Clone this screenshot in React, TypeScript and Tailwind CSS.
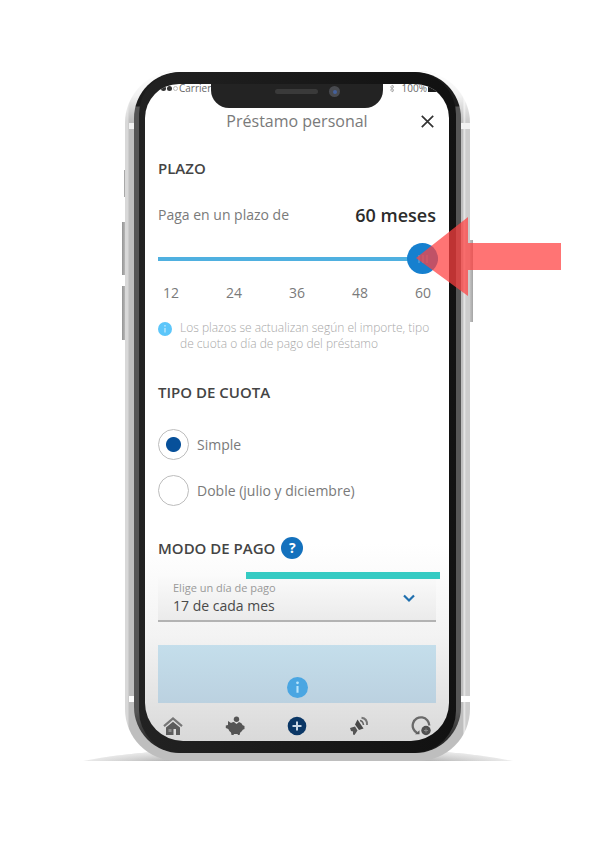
import { useState } from "react";

const terms = [12, 24, 36, 48, 60];

function PhoneShadow() {
  return (
    <svg className="absolute -bottom-px -left-[42px] h-[10px] w-[430px]" viewBox="0 0 430 10" preserveAspectRatio="none" aria-hidden="true">
      <defs>
        <linearGradient id="floor" x1="0" x2="1" y1="0" y2="0">
          <stop offset="0" stopColor="#ececec" />
          <stop offset="0.2" stopColor="#b4b4b4" />
          <stop offset="0.8" stopColor="#b4b4b4" />
          <stop offset="1" stopColor="#eeeeee" />
        </linearGradient>
        <linearGradient id="fade" x1="0" x2="0" y1="0" y2="1">
          <stop offset="0" stopColor="#fff" stopOpacity="0.7" />
          <stop offset="1" stopColor="#fff" stopOpacity="0" />
        </linearGradient>
      </defs>
      <path d="M0 9 Q30 3 70 0 H360 Q400 3 430 9 Z" fill="url(#floor)" />
      <path d="M0 9 Q30 3 70 0 H360 Q400 3 430 9 Z" fill="url(#fade)" />
    </svg>
  );
}

function SideButtons() {
  return (
    <div aria-hidden="true">
      <div className="absolute -left-px top-[99px] h-[27px] w-[2px] bg-[#a9a9a9]" />
      <div className="absolute -left-[3px] top-[151px] h-[53px] w-1 bg-gradient-to-r from-[#949494] to-[#c2c2c2]" />
      <div className="absolute -left-[3px] top-[215px] h-[54px] w-1 bg-gradient-to-r from-[#949494] to-[#c2c2c2]" />
      <div className="absolute -right-[3px] top-[169px] h-[82px] w-1 bg-gradient-to-l from-[#a4a4a4] to-[#cccccc]" />
    </div>
  );
}

function AntennaBands() {
  return (
    <div aria-hidden="true">
      <div className="absolute left-1 top-[52px] h-[6px] w-[5px] bg-[#f2f2f2]" />
      <div className="absolute right-0 top-[52px] h-[6px] w-[9px] bg-[#f2f2f2]" />
      <div className="absolute left-1 top-[625px] h-[6px] w-[5px] bg-white" />
      <div className="absolute right-0 top-[625px] h-[6px] w-[9px] bg-white" />
    </div>
  );
}

function Notch() {
  return (
    <div className="absolute left-1/2 top-0 z-10 h-6 w-[172px] -translate-x-1/2 rounded-b-[18px] bg-[#232323]" aria-hidden="true">
      <div className="absolute left-[64px] top-[5px] h-[5px] w-[43px] rounded-full bg-[#3a3a3a]" />
      <div className="absolute left-[118px] top-[2px] flex size-[11px] items-center justify-center rounded-full bg-[#484a4f]">
        <div className="size-1 rounded-full bg-[#44619c]" />
      </div>
    </div>
  );
}

function StatusBar() {
  return (
    <div className="relative h-6 text-[10px] leading-[10px] text-[#666]">
      <div className="absolute left-4 top-[2px] flex items-center gap-px">
        <span className="size-[5px] rounded-full bg-[#333]" />
        <span className="size-[5px] rounded-full bg-[#333]" />
        <span className="size-[5px] rounded-full border border-[#bbb]" />
      </div>
      <span className="absolute left-[34px] -top-px">Carrier</span>
      <svg className="absolute right-[54px] top-0 h-[9px] w-[6px]" viewBox="0 0 6 9" fill="none" stroke="#aaa" aria-hidden="true">
        <path d="M1 2.500 5 6.300 3 8V1l2 1.700L1 6.500" />
      </svg>
      <span className="absolute right-[22px] -top-px">100%</span>
      <span className="absolute right-2 top-0 h-2 w-[13px] bg-[#1a1a1a]" />
      <Notch />
    </div>
  );
}

function HomeIcon() {
  return (
    <svg className="h-5 w-5" viewBox="0 0 20 20" aria-hidden="true">
      <path d="M1 10.200 10 2.500l9 7.700" fill="none" stroke="#777" strokeWidth="2.200" />
      <path d="M3 11.500 10 5.800l7 5.700V19h-4v-6h-2.500v6H3Z" fill="#5c5c5c" />
      <path d="M5.500 13h3v3h-3Z" fill="#8a8a8a" />
    </svg>
  );
}

function PiggyIcon() {
  return (
    <svg className="h-5 w-5" viewBox="0 0 20 20" fill="#555" aria-hidden="true">
      <circle cx="11.500" cy="3.300" r="2.700" />
      <path d="M3 5 6 7q2-1.200 3-1l2.500 2L14 6q3 1 3.700 3.200L19.500 10v3l-1.700.8q-.8 1.800-2.500 2.700l-.8 2.500H13l-.5-1H9l-.5 1H6.500L6 16.500Q4 15 3.300 13L.8 12V9.500L3 9Z" />
    </svg>
  );
}

function PlusIcon() {
  return (
    <svg className="h-5 w-5" viewBox="0 0 20 20" aria-hidden="true">
      <circle cx="10" cy="10" r="9.300" fill="#0b3766" />
      <path d="M10 5.500v9M5.500 10h9" stroke="#c9d7e4" strokeWidth="2" />
    </svg>
  );
}

function MegaphoneIcon() {
  return (
    <svg className="h-5 w-5" viewBox="0 0 20 20" aria-hidden="true">
      <path d="m1 12 5-1.500 2.500 4L5.500 19 4 18.500v-3L2 15Z" fill="#555" />
      <path d="m6 8.500 2.500-5 6 9-4.500 1.500Z" fill="#484848" />
      <path d="M11 4.500q3 .5 3.500 4.500" fill="none" stroke="#666" strokeWidth="1.600" />
      <path d="M12.500 1.700q6 .8 5.500 7.300" fill="none" stroke="#777" strokeWidth="2" />
    </svg>
  );
}

function SupportIcon() {
  return (
    <svg className="h-5 w-5" viewBox="0 0 20 20" aria-hidden="true">
      <path d="M6.200 17A8.300 8.300 0 1 1 18.300 9.500" fill="none" stroke="#6a6a6a" strokeWidth="2.300" />
      <path d="M4 18.200h4.500v-4Z" fill="#5c5c5c" />
      <circle cx="15" cy="14.500" r="4.700" fill="#505050" />
      <path d="M13 14.500h4M15 12.500v4" stroke="#888" />
    </svg>
  );
}

const tabs = [
  { name: "Inicio", Icon: HomeIcon },
  { name: "Ahorro", Icon: PiggyIcon },
  { name: "Contratar", Icon: PlusIcon },
  { name: "Avisos", Icon: MegaphoneIcon },
  { name: "Ayuda", Icon: SupportIcon },
];

function InfoIcon({ className }: { className: string }) {
  return (
    <svg className={className} viewBox="0 0 20 20" aria-hidden="true">
      <circle cx="10" cy="10" r="10" fill="currentColor" />
      <circle cx="10" cy="5.500" r="1.300" fill="#b9e4fb" />
      <path d="M10 8.500v6.500" stroke="#b9e4fb" strokeWidth="2" />
    </svg>
  );
}

function LoanForm() {
  const [months, setMonths] = useState(60);
  const [fee, setFee] = useState("simple");
  const radio =
    "size-[31px] shrink-0 appearance-none rounded-full border border-[#bdbdbd] bg-white checked:bg-[radial-gradient(circle,#07509a_7px,transparent_8px)]";

  return (
    <form className="px-[13px]">
      <h2 className="mt-6 text-[15px] leading-5 font-semibold text-[#444]">PLAZO</h2>
      <div className="mt-[25px] flex items-center justify-between leading-6">
        <label htmlFor="term" className="text-sm leading-6 text-[#7a7a7a]">Paga en un plazo de</label>
        <output htmlFor="term" className="text-lg leading-6 font-semibold text-[#2b2b2b]">{months} meses</output>
      </div>
      <div className="-mr-0.5">
        <input
          id="term"
          type="range"
          min={12}
          max={60}
          step={12}
          value={months}
          onChange={(e) => setMonths(Number(e.target.value))}
          className="mt-4 block h-[31px] w-full appearance-none bg-[linear-gradient(#4fb0e0,#4fb0e0)] bg-[length:100%_4px] bg-center bg-no-repeat [&::-webkit-slider-thumb]:size-[31px] [&::-webkit-slider-thumb]:appearance-none [&::-webkit-slider-thumb]:rounded-full [&::-webkit-slider-thumb]:bg-[#1680cf] [&::-webkit-slider-thumb]:bg-[repeating-linear-gradient(90deg,#3f93d4_0_2px,#1680cf_2px_4px)] [&::-webkit-slider-thumb]:bg-[length:10px_8px] [&::-webkit-slider-thumb]:bg-center [&::-webkit-slider-thumb]:bg-no-repeat"
        />
      </div>
      <div className="mt-[9px] flex justify-between px-[5px] text-sm leading-5 text-[#7a7a7a]">
        {terms.map((t) => (
          <span key={t}>{t}</span>
        ))}
      </div>
      <div className="mt-[17px] flex gap-2">
        <InfoIcon className="mt-0.5 size-[14px] shrink-0 text-[#5cc6fa]" />
        <p className="text-xs leading-4 font-light whitespace-nowrap text-[#a8a8a8]">
          Los plazos se actualizan según el importe, tipo
          <br />
          de cuota o día de pago del préstamo
        </p>
      </div>

      <fieldset>
        <legend className="pt-[30px] text-[15px] leading-5 font-semibold text-[#444]">TIPO DE CUOTA</legend>
        <div className="mt-[27px] flex flex-col gap-[15px] text-sm text-[#7a7a7a]">
          <label className="flex items-center gap-2">
            <input type="radio" name="fee" className={radio} checked={fee === "simple"} onChange={() => setFee("simple")} />
            Simple
          </label>
          <label className="flex items-center gap-2">
            <input type="radio" name="fee" className={radio} checked={fee === "double"} onChange={() => setFee("double")} />
            Doble (julio y diciembre)
          </label>
        </div>
      </fieldset>

      <div className="mt-[31px] flex items-center gap-1.5">
        <h2 className="text-[15px] leading-[22px] font-semibold text-[#444]">MODO DE PAGO</h2>
        <button type="button" aria-label="Ayuda sobre el modo de pago" className="flex size-[22px] items-center justify-center rounded-full bg-[#1471bd] text-sm leading-none font-bold text-white">
          ?
        </button>
      </div>
      <div className="relative mt-[18px] flex h-[45px] flex-col border-b-2 border-[#b3b3b3] bg-gradient-to-b from-[#fafafa] to-[#ebebeb]">
        <div className="absolute -right-1 -top-[5px] left-[88px] h-[7px] bg-[#35cbc3]" />
        <label htmlFor="day" className="pt-[3px] pl-[15px] text-[11px] leading-[15px] text-[#999]">Elige un día de pago</label>
        <select id="day" className="h-[22px] w-full appearance-none bg-transparent pl-[15px] text-sm leading-5 text-[#4a4a4a]">
          <option>17 de cada mes</option>
          <option>2 de cada mes</option>
        </select>
        <svg className="pointer-events-none absolute right-[21px] top-[17px] h-[9px] w-3" viewBox="0 0 12 9" fill="none" stroke="#1f6fae" strokeWidth="2.200" aria-hidden="true">
          <path d="m1 1.500 5 5 5-5" />
        </svg>
      </div>
      <div className="mt-[23px] flex h-[58px] items-end justify-center bg-gradient-to-b from-[#c4deeb] to-[#bbd1e0] pb-[5px]">
        <InfoIcon className="size-[21px] text-[#4aa6e2]" />
      </div>
    </form>
  );
}

export default function App() {
  return (
    <main className="flex min-h-screen items-start justify-center bg-white pt-[71px] pr-[17px] font-['Open_Sans',sans-serif]">
      <div className="relative w-full max-w-[345px]">
        <PhoneShadow />
        <SideButtons />
        <div className="relative rounded-[52px] bg-[linear-gradient(90deg,#d8d8d8_0,#d8d8d8_3px,#bebebe_4px,#bebebe_338px,#ececec_339px,#cdcdcd_341px)] px-[9px] pt-px pb-2">
          <div className="pointer-events-none absolute inset-x-0 top-0 h-[50px] rounded-t-[52px] bg-gradient-to-b from-white via-white/80 to-transparent" />
          <AntennaBands />
          <div className="relative overflow-hidden rounded-[46px] bg-[linear-gradient(#1c1c1c_0,#1c1c1c_34px,#555_35px,#555_640px,#222_675px)] px-[5px]">
            <div className="rounded-[42px] bg-gradient-to-r from-[#222] to-[#111] py-3 pr-[7px] pl-[6px]">
              <div className="overflow-hidden rounded-t-[34px] rounded-b-[38px] bg-[linear-gradient(#fff_0,#fff_70%,#f3f3f3_84%,#d9d9d9_100%)]">
                <StatusBar />
                <header className="flex h-[26px] items-center pr-[15px] pl-[28px]">
                  <h1 className="flex-1 text-center text-base leading-5 text-[#7a7a7a]">Préstamo personal</h1>
                  <button type="button" aria-label="Cerrar" className="size-[13px]">
                    <svg viewBox="0 0 13 13" fill="none" stroke="#333" strokeWidth="1.700" aria-hidden="true">
                      <path d="m.8.8 11.400 11.400M12.200.8.8 12.200" />
                    </svg>
                  </button>
                </header>
                <LoanForm />
                <nav className="mt-[13px] flex justify-between px-[18px] pb-[5px]">
                  {tabs.map(({ name, Icon }) => (
                    <button key={name} type="button" aria-label={name}>
                      <Icon />
                    </button>
                  ))}
                </nav>
              </div>
            </div>
          </div>
        </div>
        <svg className="pointer-events-none absolute -right-[91px] top-[146px] h-[79px] w-[145px]" viewBox="0 0 145 79" aria-hidden="true">
          <path d="M0 41 52 0v26h93v27H52v26Z" fill="#ff4141" fillOpacity="0.73" />
        </svg>
      </div>
    </main>
  );
}
